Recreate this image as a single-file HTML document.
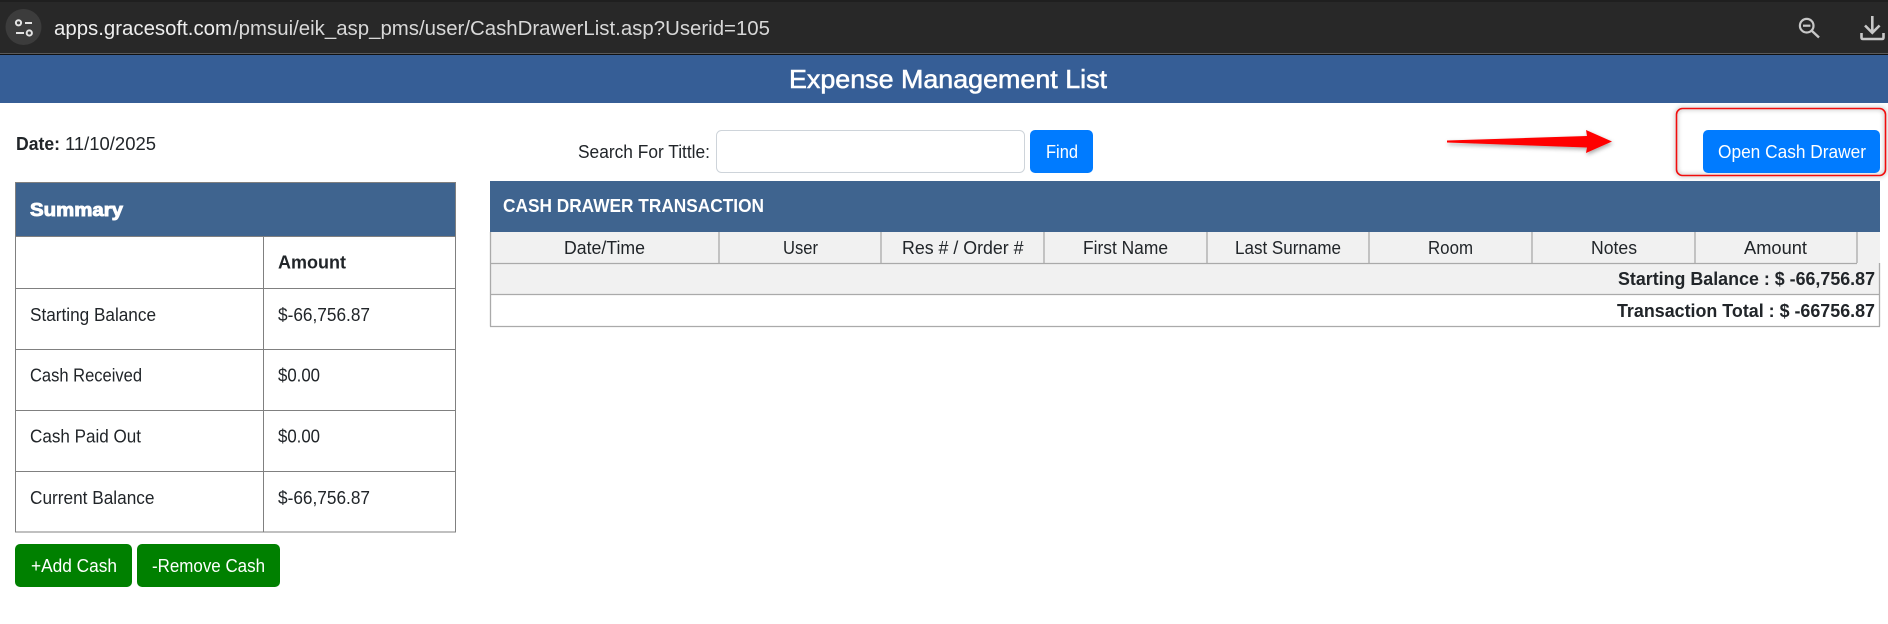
<!DOCTYPE html>
<html lang="en">
<head>
<meta charset="utf-8">
<title>Expense Management List</title>
<style>
html,body{margin:0;padding:0;background:#fff;width:1888px;height:624px;overflow:hidden}
svg{display:block}
text{font-family:"Liberation Sans",Arial,sans-serif;font-size:18px;fill:#212529}
.w{fill:#fff}
.b{font-weight:bold}
</style>
</head>
<body>
<svg xmlns="http://www.w3.org/2000/svg" width="1888" height="624" viewBox="0 0 1888 624">
<defs>
<filter id="sh" x="-20%" y="-50%" width="140%" height="200%"><feDropShadow dx="1" dy="2" stdDeviation="2" flood-color="#000" flood-opacity=".35"/></filter>
<filter id="sh2" x="-5%" y="-10%" width="110%" height="120%"><feDropShadow dx="0" dy="0" stdDeviation="2.500" flood-color="#000" flood-opacity=".45"/></filter>
</defs>

<!-- browser bar -->
<rect x="0" y="0" width="1888" height="55" fill="#282828"/>
<rect x="0" y="0" width="1888" height="2" fill="#1f1f1f"/>
<rect x="0" y="53" width="1888" height="1" fill="#5a5a5a"/>
<rect x="0" y="54" width="1888" height="1" fill="#111"/>
<circle cx="23.5" cy="27" r="18" fill="#3c3c3c"/>
<g fill="none" stroke="#e3e3e3" stroke-width="2">
<circle cx="18.5" cy="22.8" r="2.600"/><path d="M25 23h7"/>
<circle cx="29.3" cy="33" r="2.600"/><path d="M16 33h8"/>
</g>
<text x="54" y="35" style="font-size:20px;fill:#eeeeee" textLength="178" lengthAdjust="spacingAndGlyphs">apps.gracesoft.com</text>
<text x="233" y="35" style="font-size:20px;fill:#d8d8d8" textLength="537" lengthAdjust="spacingAndGlyphs">/pmsui/eik_asp_pms/user/CashDrawerList.asp?Userid=105</text>
<g fill="none" stroke="#c7c7c7" stroke-width="2.200">
<circle cx="1806.7" cy="25.7" r="6.800"/>
<path d="M1803 25.7h7.4"/>
<path d="M1811.5 30.5l7.5 7" stroke-width="2.400"/>
</g>
<g fill="none" stroke="#c7c7c7" stroke-width="2.600">
<path d="M1872.3 16v16"/>
<path d="M1865 25.5l7.3 7.3 7.3-7.3"/>
<path d="M1861.500 33v4.500q0 1.500 1.500 1.500h19q1.500 0 1.500-1.500V33"/>
</g>

<!-- page header -->
<rect x="0" y="55" width="1888" height="48" fill="#365e96"/>
<text x="789" y="88" class="w" style="font-size:26px;stroke:#fff;stroke-width:.55" textLength="318" lengthAdjust="spacingAndGlyphs">Expense Management List</text>

<!-- date -->
<text x="16" y="150" class="b" textLength="44" lengthAdjust="spacingAndGlyphs">Date:</text>
<text x="65" y="150" textLength="91" lengthAdjust="spacingAndGlyphs">11/10/2025</text>

<!-- search -->
<text x="578" y="158" textLength="132" lengthAdjust="spacingAndGlyphs">Search For Tittle:</text>
<rect x="716.500" y="130.500" width="308" height="42" rx="5" fill="#fff" stroke="#ced4da"/>
<rect x="1030" y="130" width="63" height="43" rx="5" fill="#007bff"/>
<text x="1046" y="158" class="w" textLength="32" lengthAdjust="spacingAndGlyphs">Find</text>

<!-- arrow -->
<path d="M1447 140.500L1587 136L1586 130L1612 141.500L1586 153L1587 147.500L1447 142.500Z" fill="#ff0000" filter="url(#sh)"/>

<!-- open cash drawer -->
<rect x="1676.500" y="108.500" width="209" height="67" rx="6" fill="none" stroke="#f01010" stroke-width="1.600" filter="url(#sh2)"/>
<rect x="1703" y="130" width="177" height="43" rx="5" fill="#007bff"/>
<text x="1718" y="158" class="w" textLength="148" lengthAdjust="spacingAndGlyphs">Open Cash Drawer</text>

<!-- summary table -->
<rect x="15.500" y="182.500" width="440" height="53.500" fill="#3f648f"/>
<g fill="none" stroke="#808080" stroke-width="1">
<rect x="15.500" y="182.500" width="440" height="349.500"/>
<path d="M15.500 236.500H455.500M15.500 288.500H455.500M15.500 349.500H455.500M15.500 410.500H455.500M15.500 471.500H455.500M263.500 236V532"/>
</g>
<text x="30" y="216" class="w" style="font-size:18px;font-weight:bold;stroke:#fff;stroke-width:.9" textLength="93" lengthAdjust="spacingAndGlyphs">Summary</text>
<text x="278" y="268.500" class="b" textLength="68" lengthAdjust="spacingAndGlyphs">Amount</text>
<text x="30" y="321" textLength="126" lengthAdjust="spacingAndGlyphs">Starting Balance</text>
<text x="278" y="321" textLength="92" lengthAdjust="spacingAndGlyphs">$-66,756.87</text>
<text x="30" y="381.500" textLength="112" lengthAdjust="spacingAndGlyphs">Cash Received</text>
<text x="278" y="381.500" textLength="42" lengthAdjust="spacingAndGlyphs">$0.00</text>
<text x="30" y="442.500" textLength="111" lengthAdjust="spacingAndGlyphs">Cash Paid Out</text>
<text x="278" y="442.500" textLength="42" lengthAdjust="spacingAndGlyphs">$0.00</text>
<text x="30" y="504" textLength="124.500" lengthAdjust="spacingAndGlyphs">Current Balance</text>
<text x="278" y="504" textLength="92" lengthAdjust="spacingAndGlyphs">$-66,756.87</text>

<!-- green buttons -->
<rect x="15" y="544" width="117" height="43" rx="5" fill="#008000"/>
<text x="31" y="572" class="w" textLength="86" lengthAdjust="spacingAndGlyphs">+Add Cash</text>
<rect x="137" y="544" width="143" height="43" rx="5" fill="#008000"/>
<text x="152" y="572" class="w" textLength="113" lengthAdjust="spacingAndGlyphs">-Remove Cash</text>

<!-- transactions table -->
<rect x="490" y="181" width="1390" height="51" fill="#3f648f"/>
<text x="503" y="212" class="w b" textLength="261" lengthAdjust="spacingAndGlyphs">CASH DRAWER TRANSACTION</text>
<rect x="490" y="232" width="1390" height="62" fill="#f1f1f1"/>
<g fill="none" stroke="#aaa" stroke-width="1.300">
<path d="M490.500 232V326.500M1879.500 263V326.500"/>
<path d="M719 232V263M881 232V263M1044 232V263M1207 232V263M1369 232V263M1532 232V263M1695 232V263M1857 232V263"/>
<path d="M490 263.500H1857M490 294.500H1880M490 326.500H1880"/>
</g>
<text x="564" y="254" textLength="81" lengthAdjust="spacingAndGlyphs">Date/Time</text>
<text x="783" y="254" textLength="35" lengthAdjust="spacingAndGlyphs">User</text>
<text x="902" y="254" textLength="121.500" lengthAdjust="spacingAndGlyphs">Res # / Order #</text>
<text x="1083" y="254" textLength="85" lengthAdjust="spacingAndGlyphs">First Name</text>
<text x="1235" y="254" textLength="106" lengthAdjust="spacingAndGlyphs">Last Surname</text>
<text x="1428" y="254" textLength="45" lengthAdjust="spacingAndGlyphs">Room</text>
<text x="1591" y="254" textLength="46" lengthAdjust="spacingAndGlyphs">Notes</text>
<text x="1744" y="254" textLength="63" lengthAdjust="spacingAndGlyphs">Amount</text>
<text x="1618" y="285" class="b" textLength="257" lengthAdjust="spacingAndGlyphs">Starting Balance : $ -66,756.87</text>
<text x="1617" y="317" class="b" textLength="258" lengthAdjust="spacingAndGlyphs">Transaction Total : $ -66756.87</text>
</svg>
</body>
</html>
